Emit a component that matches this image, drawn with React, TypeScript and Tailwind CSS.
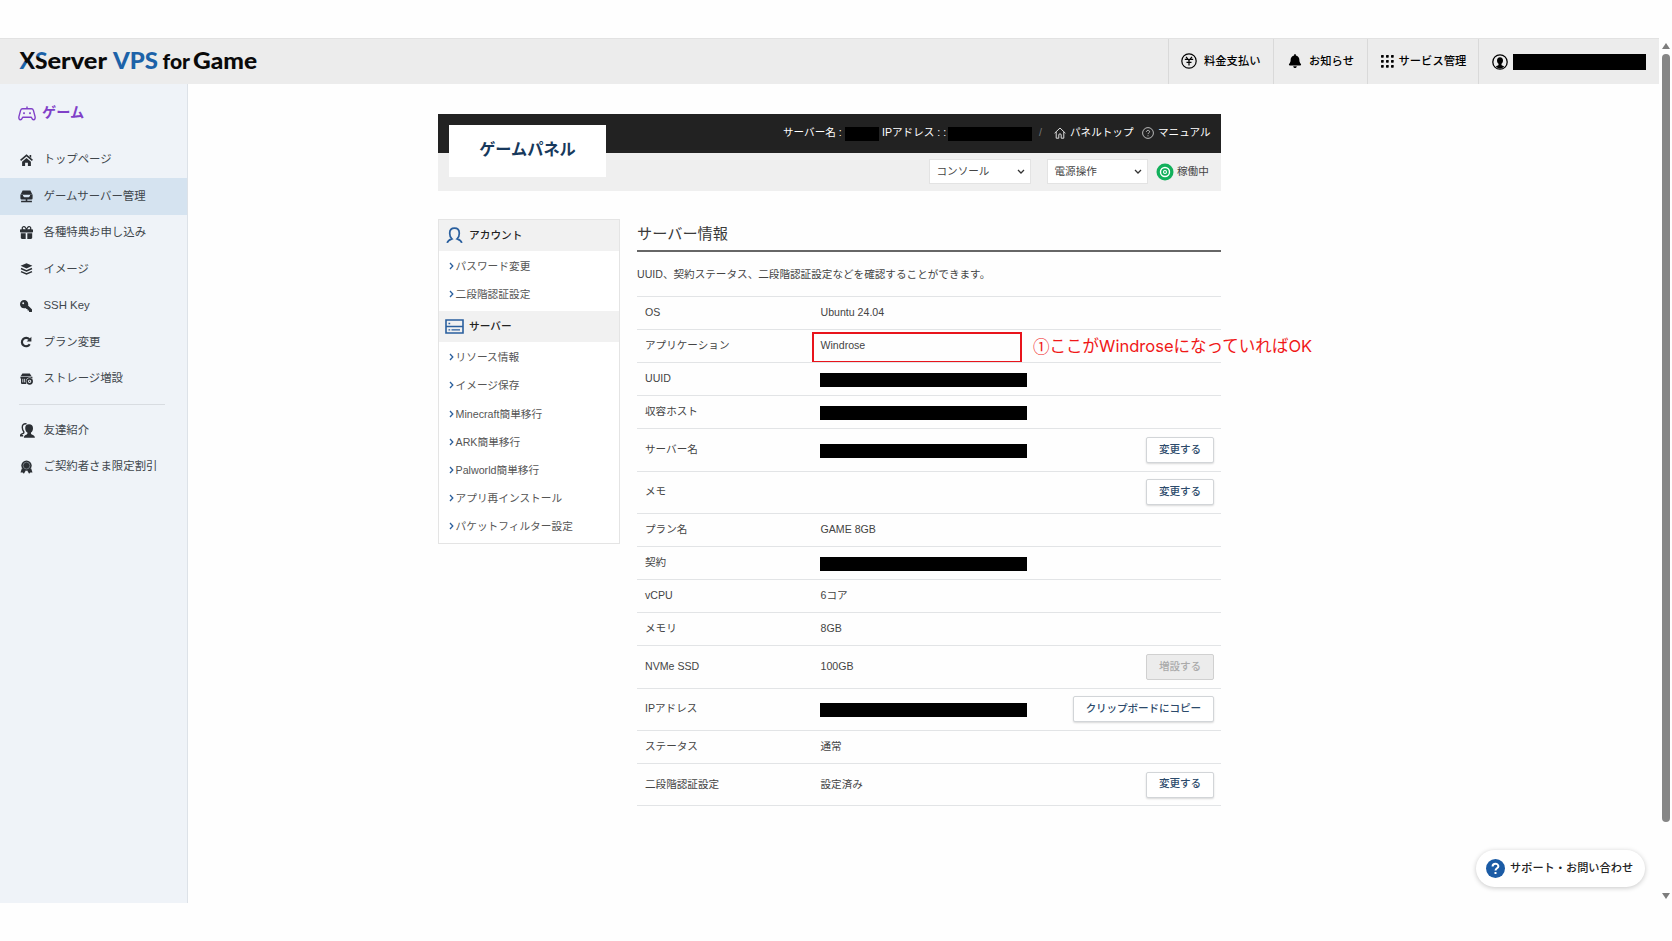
import { ReactNode } from 'react';
import clsx from 'clsx';
import { FaBell, FaGift, FaKey } from 'react-icons/fa6';

interface InfoRow {
  label: string;
  value?: string;
  masked?: boolean;
  action?: string;
  disabled?: boolean;
  highlight?: boolean;
}

const rows: InfoRow[] = [
  { label: 'OS', value: 'Ubuntu 24.04' },
  { label: 'アプリケーション', value: 'Windrose', highlight: true },
  { label: 'UUID', masked: true },
  { label: '収容ホスト', masked: true },
  { label: 'サーバー名', masked: true, action: '変更する' },
  { label: 'メモ', action: '変更する' },
  { label: 'プラン名', value: 'GAME 8GB' },
  { label: '契約', masked: true },
  { label: 'vCPU', value: '6コア' },
  { label: 'メモリ', value: '8GB' },
  { label: 'NVMe SSD', value: '100GB', action: '増設する', disabled: true },
  { label: 'IPアドレス', masked: true, action: 'クリップボードにコピー' },
  { label: 'ステータス', value: '通常' },
  { label: '二段階認証設定', value: '設定済み', action: '変更する' },
];

const accountLinks = ['パスワード変更', '二段階認証設定'];
const serverLinks = [
  'リソース情報',
  'イメージ保存',
  'Minecraft簡単移行',
  'ARK簡単移行',
  'Palworld簡単移行',
  'アプリ再インストール',
  'パケットフィルター設定',
];

function HomeIcon() {
  return (
    <svg viewBox="0 0 13 12" className="w-[13px] h-3" fill="currentColor">
      <path d="M.6 6.4L6.5 1.300l5.900 5.100" fill="none" stroke="currentColor" strokeWidth="1.600" />
      <path d="M9.600 1h1.600v3L9.600 2.800z" />
      <path d="M6.500 3.900l4.400 3.800V12H7.900V8.700H5.100V12H2.100V7.700z" />
    </svg>
  );
}

function ServerIcon() {
  return (
    <svg viewBox="0 0 13 13" className="w-[13px] h-[13px]" fill="currentColor">
      <path d="M2.600 0.400h7.800L12.400 4.400H0.600z" />
      <path fillRule="evenodd" d="M0.400 4.400h12.200v3.800a1.200 1.200 0 0 1-1.200 1.200H1.600a1.200 1.200 0 0 1-1.200-1.200zM3 5v1.100l1.300 1.200h4.400L10 6.100V5z" />
      <path d="M5.700 9h1.600v1.800h4.600v1.400H1.100v-1.400h4.600z" />
    </svg>
  );
}

function LayersIcon() {
  return (
    <svg viewBox="0 0 13 12" className="w-[13px] h-3" fill="currentColor">
      <path d="M6.500.2l5.900 2.600-5.900 2.600L.6 2.800z" />
      <path d="M1 5.500l5.500 2.400L12 5.500M1 8.600L6.500 11 12 8.600" fill="none" stroke="currentColor" strokeWidth="1.500" />
    </svg>
  );
}

function ReloadIcon() {
  return (
    <svg viewBox="0 0 12 12" className="size-3" fill="none" stroke="currentColor">
      <path d="M9.300 3.300A4.200 4.200 0 1 0 9.700 8.200" strokeWidth="2.200" />
      <path d="M11.400.8v4.700H6.700z" fill="currentColor" stroke="none" />
    </svg>
  );
}

function StorageIcon() {
  return (
    <svg viewBox="0 0 13 12" className="w-[13px] h-3" fill="currentColor">
      <path d="M2.400 0.600h7.400l1.800 2.600H0.600z" />
      <path d="M0.400 3.800h12v1.600a4 4 0 0 0-6.600 3.200q0 1.400.7 2.400H2a1 1 0 0 1-1-1V5.600H.4z" />
      <path d="M2.800 5.800v3.600M4.600 5.800v3.600" stroke="#f0f4f9" strokeWidth=".8" />
      <circle cx="9.600" cy="8.300" r="2.500" fill="none" stroke="currentColor" strokeWidth="1.700" />
      <circle cx="9.600" cy="8.300" r=".7" />
    </svg>
  );
}

function FriendsIcon() {
  return (
    <svg viewBox="0 0 15 15" className="w-[15px] h-[15px]" fill="currentColor">
      <path d="M9 1.300c2.700 0 4 1.600 4 3.900 0 2-.9 3.600-2 4.400v1.200c.2 1 3.900 1.200 3.900 4H3.900c0-2.800 3.300-3 3.500-4V9.600C6.200 8.800 5.200 7.200 5.200 5.200c0-2.300 1.200-3.900 3.800-3.900z" />
      <path d="M6.600.9C3.700.3 2.100 2 2.300 4.600c0 1.900.7 3.200 1.500 4.100v1c-.3.900-3.200 1-3.400 3.100h2.800" fill="none" stroke="currentColor" strokeWidth="1.400" />
    </svg>
  );
}

function BadgeIcon() {
  return (
    <svg viewBox="0 0 13 14" className="w-[13px] h-[14px]" fill="currentColor">
      <circle cx="6.500" cy="5.600" r="5.200" />
      <path d="M1.900 8.200L.5 12.600l2.200-.2 1.200 1.300L5.800 10.600zM11.100 8.200l1.400 4.400-2.200-.2-1.200 1.300-1.900-3.100z" />
      <circle cx="6.500" cy="5.600" r="3.400" fill="none" stroke="#8b939c" strokeWidth=".7" />
    </svg>
  );
}

const sideItems: { label: string; icon: ReactNode; active?: boolean }[] = [
  { label: 'トップページ', icon: <HomeIcon /> },
  { label: 'ゲームサーバー管理', icon: <ServerIcon />, active: true },
  { label: '各種特典お申し込み', icon: <FaGift size={13} /> },
  { label: 'イメージ', icon: <LayersIcon /> },
  { label: 'SSH Key', icon: <FaKey size={12} className="-scale-x-100" /> },
  { label: 'プラン変更', icon: <ReloadIcon /> },
  { label: 'ストレージ増設', icon: <StorageIcon /> },
];

const sideExtras = [
  { label: '友達紹介', icon: <FriendsIcon /> },
  { label: 'ご契約者さま限定割引', icon: <BadgeIcon /> },
];

function Logo() {
  return (
    <svg width="240" height="30" className="ml-[18px]" fontFamily="Lato, sans-serif" fontWeight="900" fontSize="22.5">
      <defs>
        <linearGradient id="logo-x" gradientUnits="userSpaceOnUse" x1="1.500" y1="23" x2="9.500" y2="15">
          <stop offset="0.75" stopColor="#1c62a8" />
          <stop offset="0.85" stopColor="#0a0a0a" />
        </linearGradient>
        <linearGradient id="logo-s" gradientUnits="userSpaceOnUse" x1="20" y1="23" x2="26" y2="7">
          <stop offset="0.62" stopColor="#0a0a0a" />
          <stop offset="0.72" stopColor="#1c62a8" />
        </linearGradient>
      </defs>
      <text x="1.500" y="23" fill="url(#logo-x)" textLength="15.500" lengthAdjust="spacingAndGlyphs">X</text>
      <text x="17" y="23" fill="url(#logo-s)" textLength="12.500" lengthAdjust="spacingAndGlyphs">S</text>
      <text x="29.500" y="23" fill="#0a0a0a" textLength="59.500" lengthAdjust="spacingAndGlyphs">erver</text>
      <text x="95" y="23" fill="#1c62a8" textLength="45" lengthAdjust="spacingAndGlyphs">VPS</text>
      <text x="144.500" y="23" fill="#0a0a0a" fontSize="20.500" textLength="27.500" lengthAdjust="spacingAndGlyphs">for</text>
      <text x="175" y="23" fill="#0a0a0a" textLength="64" lengthAdjust="spacingAndGlyphs">Game</text>
    </svg>
  );
}

function Header() {
  return (
    <header className="flex h-[46px] w-[1659px] border-t border-[#e2e2e2] bg-[#ececec] text-[11.300px] font-medium text-black">
      <div className="flex flex-1 items-center pb-px">
        <Logo />
      </div>
      <div className="flex w-[105px] items-center border-l border-[#d9d9d9] pl-3 pb-px">
        <svg viewBox="0 0 16 16" className="mr-[7px] size-4" fill="none" stroke="currentColor" strokeWidth="1.200">
          <circle cx="8" cy="8" r="7.200" />
          <path d="M5 3.800l3 3.600 3-3.600M8 7.400v5M3.800 6.300h2.700M9.500 6.300h2.700M5.500 9.300h5" />
        </svg>
        料金支払い
      </div>
      <div className="flex w-[94px] items-center border-l border-[#d9d9d9] pl-[14px] pb-px">
        <FaBell size={14} className="mr-[7px]" />
        お知らせ
      </div>
      <div className="flex w-[111px] items-center border-l border-[#d9d9d9] pl-[13px] pb-px">
        <svg viewBox="0 0 13 13" className="mr-[4.500px] size-[13px]" fill="currentColor">
          {[0, 5, 10].map((y) =>
            [0, 5, 10].map((x) => <rect key={`${x}-${y}`} x={x} y={y} width="2.700" height="2.700" rx=".6" />),
          )}
        </svg>
        サービス管理
      </div>
      <div className="flex w-[181px] items-center border-l border-[#d9d9d9] pl-[13px]">
        <svg viewBox="0 0 16 16" className="mr-[5px] size-4">
          <circle cx="8" cy="8" r="7.200" fill="none" stroke="#000" strokeWidth="1.300" />
          <path d="M8 3.200c2 0 3 1.300 3 3.200 0 1.600-.7 2.700-1.500 3.300v1.200c.5.600 2 .7 2.600 1.600A6.500 6.500 0 0 1 8 14.600a6.500 6.500 0 0 1-4.100-2.100c.6-.9 2.100-1 2.600-1.600V9.700C5.700 9.100 5 8 5 6.400c0-1.900 1-3.200 3-3.200z" />
        </svg>
        <span className="h-[16px] w-[133px] bg-black" />
      </div>
    </header>
  );
}

function SideItem({ label, icon, active }: { label: string; icon: ReactNode; active?: boolean }) {
  return (
    <li className={clsx('flex h-[36.500px] items-center pl-[19px]', active && 'bg-[#d5e3f0]')}>
      <span className="flex w-[24.500px] pl-[0.500px] text-[#2b2f34]">{icon}</span>
      <span>{label}</span>
    </li>
  );
}

function Sidebar() {
  return (
    <aside className="h-[819px] w-[188px] border-r border-[#dde2e8] bg-[#eff3f8] text-[11.400px] text-[#40464c]">
      <div className="flex h-[57px] items-center pt-px pl-[18px] text-[14.200px] font-bold text-[#8040c8]">
        <svg viewBox="0 0 18 15" className="mr-[6px] h-[15px] w-[18px]" fill="none" stroke="currentColor" strokeWidth="1.400" strokeLinejoin="round">
          <path d="M9 .5v2.300M4.500 2.800h9c1 0 1.600.7 1.900 1.600l1.600 6c.5 2-.3 3.400-1.400 3.400-1.300 0-1.700-1-2.300-2.600H4.700c-.6 1.600-1 2.600-2.300 2.600C1.300 13.800.5 12.400 1 10.400l1.600-6c.3-.9.9-1.600 1.900-1.600z" />
          <path d="M5 7.200h2M6 6.200v2M11 7.200h2M12 6.200v2" strokeWidth="1" />
        </svg>
        ゲーム
      </div>
      <ul className="pt-[0.500px]">
        {sideItems.map((item) => (
          <SideItem key={item.label} {...item} />
        ))}
      </ul>
      <hr className="mt-[7px] mb-[7px] ml-[19px] w-[146px] border-[#d8dce1]" />
      <ul>
        {sideExtras.map((item) => (
          <SideItem key={item.label} {...item} />
        ))}
      </ul>
    </aside>
  );
}

function FakeSelect({ label, className }: { label: string; className?: string }) {
  return (
    <div className={clsx('flex h-[25px] items-center justify-between border border-[#e3e3e3] bg-white pr-[5px] pl-[6.500px]', className)}>
      <span>{label}</span>
      <svg viewBox="0 0 8 6" className="h-[6px] w-2" fill="none" stroke="#333" strokeWidth="1.300">
        <path d="M1 1l3 3 3-3" />
      </svg>
    </div>
  );
}

function PanelHeader() {
  return (
    <div className="relative text-[10.600px]">
      <div className="flex h-[39px] items-center bg-[#222] pl-[345px] pb-px whitespace-nowrap text-white">
        <span className="w-[62px]">サーバー名 :</span>
        <span className="mt-[2px] mr-[3px] h-[14px] w-[34px] bg-black" />
        <span className="w-[66px]">IPアドレス : :</span>
        <span className="mt-[2px] h-[14px] w-[84px] bg-black" />
        <span className="ml-[7px] w-[15px] text-[#777]">/</span>
        <svg viewBox="0 0 12 12" className="mr-[4px] size-3" fill="none" stroke="#ddd" strokeWidth="1">
          <path d="M.6 6.200L6 1l5.400 5.200M2.200 5v6.200h2.600V8a1.200 1.200 0 0 1 2.400 0v3.200h2.600V5" />
        </svg>
        <span className="w-[72px]">パネルトップ</span>
        <svg viewBox="0 0 12 12" className="mr-[4px] size-3" fill="none" stroke="#ccc" strokeWidth=".9">
          <circle cx="6" cy="6" r="5.400" />
          <path d="M4.400 4.900c0-2 3.200-2 3.200-.2 0 1.200-1.600 1.200-1.600 2.400M6 8.300v1" />
        </svg>
        <span>マニュアル</span>
      </div>
      <div className="flex h-[38px] items-center bg-[#efefef] pl-[491px] pb-px text-[#444]">
        <FakeSelect label="コンソール" className="w-[102px]" />
        <FakeSelect label="電源操作" className="ml-[16px] w-[101px]" />
        <svg viewBox="0 0 18 18" className="mr-[3px] ml-[8px] size-[18px]" fill="none" stroke="#fff">
          <circle cx="9" cy="9" r="8.500" fill="#12b05b" stroke="none" />
          <circle cx="9" cy="9" r="4.500" strokeWidth="1.400" />
          <circle cx="9" cy="9" r="1.500" strokeWidth="1.100" />
        </svg>
        <span>稼働中</span>
      </div>
      <h1 className="absolute top-[11px] left-[11px] flex h-[52px] w-[157px] items-center justify-center bg-white pb-[3px] text-[16.200px] font-bold text-[#17395c]">
        ゲームパネル
      </h1>
    </div>
  );
}

function MenuLink({ label }: { label: string }) {
  return (
    <li className="flex h-[28.070px] items-center pl-[9.500px]">
      <svg viewBox="0 0 5 8" className="mr-[2px] h-2 w-[5px]" fill="none" stroke="#2a5f9e" strokeWidth="1.300">
        <path d="M1 1l2.800 3L1 7" />
      </svg>
      {label}
    </li>
  );
}

function PanelMenu() {
  return (
    <nav className="h-[325px] w-[182px] border border-[#e4e4e4] bg-white text-[10.700px] text-[#555]">
      <h2 className="flex h-[31px] items-center bg-[#f1f1f1] pl-[7px] font-medium text-[#222]">
        <svg viewBox="0 0 17 17" className="mr-[6px] size-[17px]" fill="none" stroke="#2a5f9e" strokeWidth="1.700">
          <path d="M1.200 15.900c.6-2.400 2.400-3.200 4.700-4C4.500 10.800 3.700 8.900 3.700 6.200c0-3.100 1.900-5.100 4.800-5.100s4.800 2 4.800 5.100c0 2.700-.8 4.600-2.200 5.700 2.300.8 4.100 1.600 4.700 4" />
        </svg>
        アカウント
      </h2>
      <ul className="h-[60px] pt-px">
        {accountLinks.map((l) => (
          <MenuLink key={l} label={l} />
        ))}
      </ul>
      <h2 className="flex h-[31px] items-center bg-[#f1f1f1] pl-[6px] font-medium text-[#222]">
        <svg viewBox="0 0 19 15" className="mr-[5px] h-[15px] w-[19px]" fill="none" stroke="#2a5f9e" strokeWidth="1.600">
          <path d="M1 1h17v13H1zM1 7.500h17" />
          <path d="M3.500 4.500h1.700M3.500 10.800h1.700M6.500 10.800h8.500" strokeWidth="1.300" />
        </svg>
        サーバー
      </h2>
      <ul className="pt-[1.400px]">
        {serverLinks.map((l) => (
          <MenuLink key={l} label={l} />
        ))}
      </ul>
    </nav>
  );
}

function Row({ row }: { row: InfoRow }) {
  return (
    <div
      className={clsx(
        'relative flex items-center border-t border-[#e2e4e6] pl-2',
        row.action ? 'h-[42.300px]' : 'h-[33.100px]',
      )}
    >
      <span className="w-[175.500px]">{row.label}</span>
      {row.masked ? <span className="-ml-px mt-px h-[14px] w-[207px] bg-black" /> : <span>{row.value}</span>}
      {row.action && (
        <button
          className={clsx(
            'mr-[7px] ml-auto flex h-[26px] items-center rounded-[2px] border px-[12px] pb-px font-medium tracking-[-0.01em]',
            row.disabled
              ? 'border-[#d0d0d0] bg-[#ececec] text-[#aaa]'
              : 'border-[#d2d5d8] bg-white text-[#2c4a6b] shadow-[0_1px_2px_rgba(0,0,0,0.15)]',
          )}
        >
          {row.action}
        </button>
      )}
      {row.highlight && (
        <>
          <span className="absolute top-[2px] left-[175px] h-[31px] w-[210px] border-2 border-[#e8141c]" />
          <span className="absolute top-[4px] left-[396px] flex font-['Inter','Noto_Sans_CJK_JP',sans-serif] text-[16.550px] leading-6 whitespace-nowrap text-[#f01818]">
            <span className="font-['Noto_Sans_CJK_JP',sans-serif]">①</span>
            ここがWindroseになっていればOK
          </span>
        </>
      )}
    </div>
  );
}

function ServerInfo() {
  return (
    <section className="w-[584px] text-[10.600px] text-[#444]">
      <h2 className="h-[33px] border-b-2 border-[#666] pt-[3px] text-[15.200px] leading-6 text-[#3a3a3a]">サーバー情報</h2>
      <p className="h-[44px] leading-[45px]">UUID、契約ステータス、二段階認証設定などを確認することができます。</p>
      <div className="border-b border-[#e2e4e6]">
        {rows.map((row) => (
          <Row key={row.label} row={row} />
        ))}
      </div>
    </section>
  );
}

function Scrollbar() {
  return (
    <div className="flex w-[13px] flex-col items-center pt-[5px] pb-[4px]">
      <svg viewBox="0 0 8 6" className="h-[6px] w-2" fill="#7d7d7d">
        <path d="M4 0l4 6H0z" />
      </svg>
      <div className="mt-[5px] h-[768px] w-2 rounded-full bg-[#868686]" />
      <svg viewBox="0 0 8 6" className="mt-auto h-[6px] w-2" fill="#7d7d7d">
        <path d="M4 6L0 0h8z" />
      </svg>
    </div>
  );
}

export default function App() {
  return (
    <div className="relative h-[941px] w-[1672px] overflow-hidden bg-[#fefefe] pt-[38px] font-['Liberation_Sans','Noto_Sans_CJK_JP',sans-serif]">
      <div className="flex">
        <div className="w-[1659px]">
          <Header />
          <div className="flex">
            <Sidebar />
            <main className="ml-[250px] w-[783px] pt-[30px]">
              <PanelHeader />
              <div className="mt-[28px] flex justify-between">
                <PanelMenu />
                <ServerInfo />
              </div>
            </main>
          </div>
        </div>
        <Scrollbar />
      </div>

      {/* Floating support button */}
      <button className="absolute top-[850px] left-[1476px] flex h-[37px] w-[169px] items-center rounded-full bg-white pl-[10px] text-[11.200px] font-medium whitespace-nowrap text-[#222] shadow-[0_1px_5px_rgba(0,0,0,0.22)]">
        <svg viewBox="0 0 19 19" className="mr-[5px] size-[19px]" fill="none" stroke="#fff" strokeWidth="2">
          <circle cx="9.500" cy="9.500" r="9.500" fill="#1b5ba5" stroke="none" />
          <path d="M6.600 7.500c0-3.600 5.800-3.400 5.800-.2 0 2-2.900 2-2.900 4.200M9.500 13v2" />
        </svg>
        サポート・お問い合わせ
      </button>
    </div>
  );
}
